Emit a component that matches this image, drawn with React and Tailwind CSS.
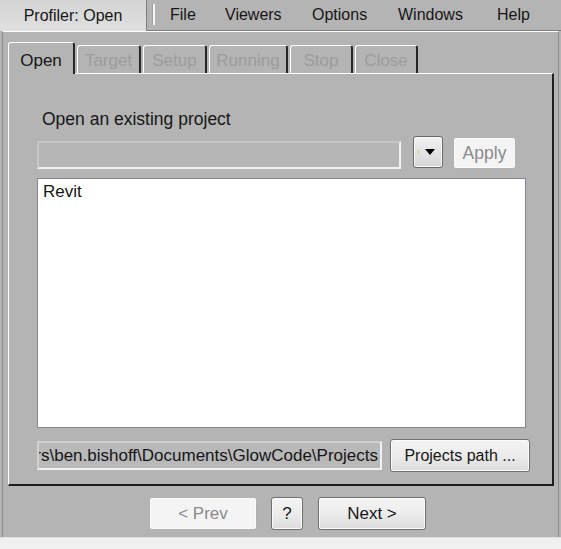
import React from "react";

function Btn({ children, className = "", disabled = false }) {
  return (
    <div
      className={`flex items-center justify-center rounded-[3px] border ${
        disabled
          ? "border-[#adb2b5] bg-[#f4f4f4] text-[#8a8a8e]"
          : "border-[#707070] bg-linear-to-b from-[#f4f4f4] via-[#ececec] to-[#dcdcdc] text-[#161616]"
      } shadow-[inset_0_0_0_1px_#fbfbfb] ${className}`}
    >
      {children}
    </div>
  );
}

function Tab({ label, w, selected = false }) {
  if (selected) {
    return (
      <div
        className={`relative z-10 -mb-px h-[32px] ${w} flex items-center justify-center pt-[4px] rounded-t-[3px] border-l border-t border-white border-r-2 border-r-[#262626] bg-[#b4b4b4] text-[17px] text-[#161616]`}
      >
        {label}
      </div>
    );
  }
  return (
    <div
      className={`h-[28px] ${w} flex items-center justify-center pt-[2px] rounded-t-[3px] border-l border-t border-white border-r-2 border-r-[#262626] text-[17px] text-[#9c9c9c]`}
    >
      {label}
    </div>
  );
}

export default function App() {
  return (
    <div className="w-[561px] h-[549px] bg-[#b4b4b4] flex flex-col overflow-hidden text-[#161616] font-['Liberation_Sans',Arial,sans-serif]">
      {/* menu bar */}
      <div className="h-[31px] shrink-0 flex">
        <div className="w-[146px] h-full bg-linear-to-b from-[#d4d4d4] to-[#e0e0e0] flex items-center justify-center text-[16px]">
          Profiler: Open
        </div>
        <div className="flex-1 h-full border-l border-b border-[#7c7c7c] flex items-center text-[16px]">
          <div className="ml-[5px] mb-[2px] w-[3px] h-[21px] border-l border-[#a0a0a0] bg-[#f6f6f6]" />
          <div className="ml-[15px] w-[55px]">File</div>
          <div className="w-[87px]">Viewers</div>
          <div className="w-[86px]">Options</div>
          <div className="w-[99px]">Windows</div>
          <div>Help</div>
        </div>
      </div>

      {/* window */}
      <div className="flex-1 mx-[2px] border-x border-[#8a8a8a] border-t border-t-white flex flex-col pt-[10px]">
        {/* tabs */}
        <div className="h-[31px] shrink-0 flex items-end gap-[2px] pl-[5px]">
          <Tab label="Open" w="w-[67px]" selected />
          <Tab label="Target" w="w-[64px]" />
          <Tab label="Setup" w="w-[64px]" />
          <Tab label="Running" w="w-[79px]" />
          <Tab label="Stop" w="w-[63px]" />
          <Tab label="Close" w="w-[63px]" />
        </div>

        {/* panel */}
        <div className="ml-[5px] mr-[4px] h-[413px] shrink-0 border-l border-t border-white border-r-2 border-b-2 border-r-[#1e1e1e] border-b-[#1e1e1e] flex flex-col pl-[28px] pt-[35px]">
          <div className="h-[20px] leading-[20px] text-[17.5px] pl-[5px]">Open an existing project</div>

          <div className="mt-[8px] h-[32px] flex items-end">
            <div className="w-[364px] h-[28px] border-2 border-t-[#c6c6c6] border-l-[#c6c6c6] border-b-[#f2f2f2] border-r-[#f2f2f2] bg-[#b6b6b6]" />
            <div className="ml-[12px] mb-[1px] w-[30px] h-[32px] rounded-[3px] border border-[#6a6a6a] bg-linear-to-b from-[#f2f2f2] to-[#d6d6d6] shadow-[inset_0_0_0_1px_#f8f8f8] flex items-center justify-end pr-[7px] relative">
              <div className="absolute left-[4px] top-[13px] w-[1px] h-[4px] bg-[#d9c48a]" />
              <svg width="10" height="6" viewBox="0 0 10 6">
                <path d="M0 0 H10 L5 6 Z" fill="#000" />
              </svg>
            </div>
            <Btn disabled className="ml-[10px] w-[63px] h-[32px] text-[17.5px]">
              Apply
            </Btn>
          </div>

          <div className="mt-[9px] w-[489px] h-[250px] border border-[#828790] bg-white px-[5px] pt-[3px] text-[17px] leading-[20px]">
            Revit
          </div>

          <div className="mt-[11px] h-[33px] flex items-center">
            <div className="w-[345px] h-[29px] border-2 border-t-[#d0d0d0] border-l-[#d0d0d0] border-b-[#f2f2f2] border-r-[#f2f2f2] bg-[#b9b9b9] overflow-hidden flex items-center justify-end pr-[2px] whitespace-nowrap text-[17px]">
              C:\Users\ben.bishoff\Documents\GlowCode\Projects
            </div>
            <Btn className="ml-[8px] w-[140px] h-[33px] text-[16px]">Projects path ...</Btn>
          </div>
        </div>

        {/* bottom buttons */}
        <div className="flex-1 flex items-start pt-[11px] pl-[146px] text-[17px]">
          <Btn disabled className="w-[108px] h-[33px]">
            &lt; Prev
          </Btn>
          <Btn className="ml-[14px] w-[32px] h-[33px]">?</Btn>
          <Btn className="ml-[15px] w-[108px] h-[33px]">Next &gt;</Btn>
        </div>
      </div>

      <div className="h-[12px] shrink-0 bg-[#f0f0f0] border-t border-[#e0e0e0]" />
    </div>
  );
}
